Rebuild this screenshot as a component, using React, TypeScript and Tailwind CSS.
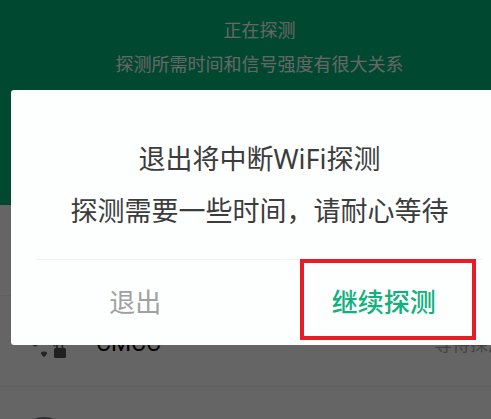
type Network = {
  id: string
  locked: boolean
  name: string
  status: string
}

const networks: Network[] = [
  { id: 'cmcc', locked: true, name: 'CMCC', status: '等待探测' },
  { id: 'next', locked: false, name: '', status: '' },
]

function SignalIcon({ locked }: { locked: boolean }) {
  return (
    <svg aria-hidden="true" className="h-[38px] w-11 shrink-0" fill="none" viewBox="0 0 44 38">
      <g stroke="#77777a" strokeLinecap="round" strokeWidth="3">
        <path d="M3 10C14 0 30 0 41 10" />
        <path d="M15 18.500C19 14 25 14 29 18.500" />
      </g>
      <path d="M19 27.600C20 26 24 26 25 27.600C25.600 28.800 23 31.600 22 32C21 31.600 18.400 28.800 19 27.600Z" fill="#5a5a5e" />
      {locked ? (
        <>
          <path d="M9.500 17.500L16 18.500C15.800 20.600 14 21.800 12.600 21.400C11 20.800 9.800 19.500 9.500 17.500Z" fill="#5a5a5e" />
          <path d="M31 19.500L33.500 21.500" stroke="#77777a" strokeWidth="1.500" />
          <path d="M35 25V19a2.700 2.700 0 0 1 5.400 0V25" stroke="#5a5a5e" strokeWidth="1.800" />
          <rect fill="#505054" height="10" rx="1.500" width="12" x="32" y="23" />
        </>
      ) : null}
    </svg>
  )
}

function NetworkRow({ network }: { network: Network }) {
  return (
    <li className="flex h-[91px] items-center border-b border-[#f2f0f2] pl-[22px] pr-[13px] pt-[6px]">
      <SignalIcon locked={network.locked} />
      <span className="ml-[30px] flex-1 font-[Roboto,sans-serif] text-[23px] text-black">{network.name}</span>
      <span className="text-lg leading-8 text-[#a8a8a8]">{network.status}</span>
    </li>
  )
}

function ExitDialog() {
  return (
    <div
      aria-labelledby="exit-title"
      aria-modal="true"
      className="absolute inset-x-[11px] top-[90px] rounded-[3px] bg-[#fdfefe]"
      role="dialog"
    >
      <div className="pb-[22px] pt-[43px] text-center text-[27px] leading-[52px] text-[#3c3c3c]" id="exit-title">
        <p>退出将中断WiFi探测</p>
        <p>探测需要一些时间，请耐心等待</p>
      </div>
      <div className="mx-[25px] border-t border-[#f1f1f6]" />
      <div className="grid h-[85px] grid-cols-2 text-[26px]">
        <button className="text-[#a0a0a0]" type="button">
          退出
        </button>
        <button className="relative font-medium text-[#10b17b]" type="button">
          继续探测
          <span className="absolute -top-px bottom-[5px] left-10 right-8 border-4 border-[#e81c26]" />
        </button>
      </div>
    </div>
  )
}

export default function App() {
  return (
    <div className="h-screen overflow-hidden font-['Noto_Sans','Noto_Sans_CJK_SC',sans-serif]" lang="zh-CN">
      {/* The screen runs past the right edge of the window */}
      <main className="relative -mr-7 h-full overflow-hidden bg-[#fffcff]">
        <header className="h-[205px] bg-[#00b478] pt-[13px] text-center text-lg leading-[34px] text-white">
          <h1>正在探测</h1>
          <p>探测所需时间和信号强度有很大关系</p>
        </header>
        <div className="h-[91px] border-b border-[#f2f0f2]" />
        <ul>
          {networks.map(network => (
            <NetworkRow key={network.id} network={network} />
          ))}
        </ul>
        <div className="absolute inset-0 bg-black/60" />
        <ExitDialog />
      </main>
    </div>
  )
}
